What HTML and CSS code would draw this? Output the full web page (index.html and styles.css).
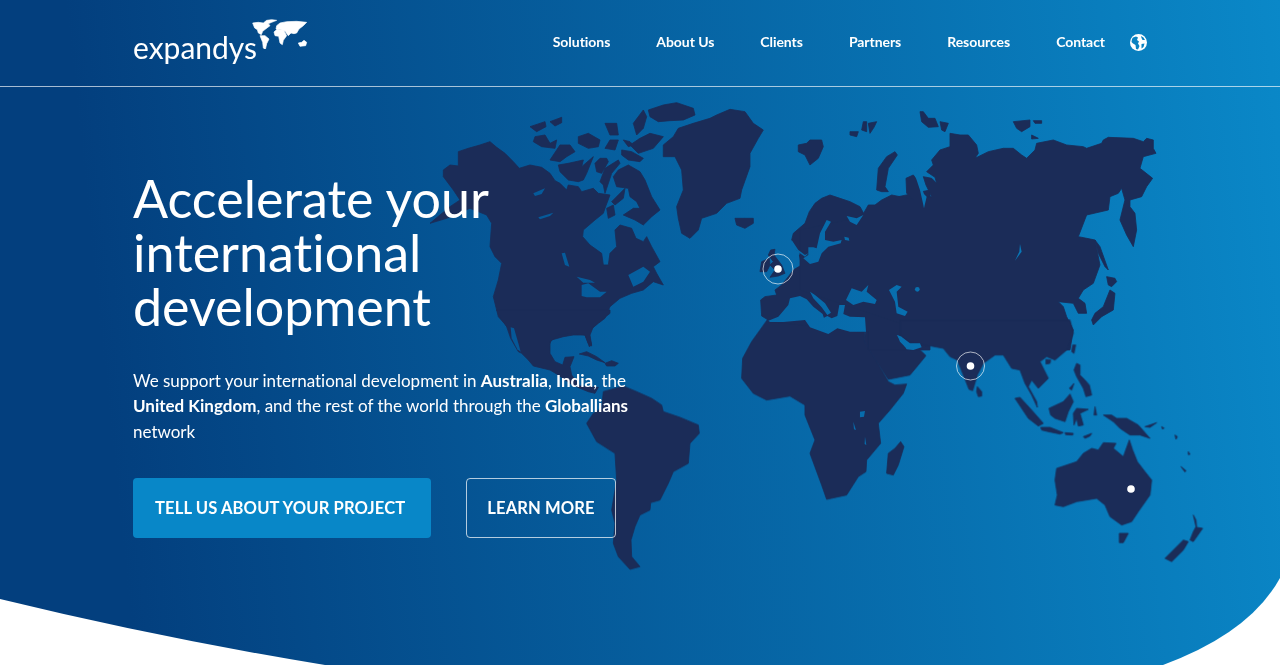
FILE: index.html
```html
<!DOCTYPE html>
<html lang="en">
<head>
    <meta charset="UTF-8">
    <meta name="viewport" content="width=device-width, initial-scale=1.0">
    <title>Expandys</title>
    <link rel="stylesheet" href="styles.css">
</head>
<body>
    <div class="hero">
        <svg class="world" viewBox="0 0 1280 665" width="1280" height="665" aria-hidden="true">
            <defs>
                <!-- seas and lakes cut out of the land -->
                <mask id="water" maskUnits="userSpaceOnUse" x="0" y="0" width="1280" height="665">
                    <rect width="1280" height="665" fill="#fff"/>
                    <g fill="#000" transform="translate(430 90) scale(.3333)">
                        <path d="M310 310L345 295L335 312L315 318ZM325 382L370 368L360 378L330 388ZM395 490L405 488L418 530L405 525ZM455 585L475 580L510 605L530 605L510 622L470 622L455 618ZM440 560L480 570L495 578L460 578ZM595 555L640 530L660 545L640 575L610 590Z"/>
                    </g>
                    <g fill="#000" transform="translate(490 310) scale(.3333)">
                        <path d="M62 52L72 55L85 100L92 125L82 118L65 85Z"/>
                    </g>
                    <g fill="#000" transform="translate(750 190) scale(.3333)">
                        <path d="M55 392L85 380L115 345L120 325L150 318L170 328L190 350L218 372L222 385L205 392L232 378L245 385L262 378L268 345L285 345L280 372L300 380L345 382L348 425L300 425L262 415L235 432L180 412L165 390L100 396L60 396Z"/>
                        <path d="M180 305L195 315L225 340L243 368L232 375L215 352L190 325Z"/>
                        <path d="M288 330L305 295L335 305L355 285L350 305L380 330L375 342L340 335L310 345Z"/>
                        <path d="M417 300L440 285L455 290L440 305L445 350L473 365L465 378L440 370L435 335Z"/>
                        <circle cx="502" cy="298" r="7"/>
                        <path d="M200 175L210 130L230 90L243 95L225 125L225 150L250 155L275 150L272 160L235 170L215 190L205 215L180 222L160 205L175 195L175 172L190 172Z"/>
                        <path d="M125 150L145 180L165 195L175 190L165 200L150 190L120 165Z"/>
                        <path d="M290 78L320 85L340 75L330 90L320 105L300 95Z"/>
                        <path d="M283 140L296 143L298 152L285 150ZM370 28L382 28L378 38Z"/>
                        <path d="M442 435L455 440L475 462L500 465L495 475L465 470L450 455Z"/>
                    </g>
                    <g fill="#000" transform="translate(800 90) scale(.3333)">
                        <path d="M660 462L665 485L645 512L658 485Z"/>
                        <path d="M345 255L352 258L372 312L380 320L372 355L368 335L360 300Z"/>
                    </g>
                    <g fill="#000" transform="translate(560 310) scale(.3333)">
                        <path d="M1010 75L1030 85L1050 100L1080 100L1085 112L1060 120L1040 118L1025 95Z"/>
                        <path d="M900 305L915 303L912 320L900 322ZM880 335L888 360L882 358ZM915 380L919 405L914 402Z"/>
                    </g>
                </mask>
            </defs>
            <g class="land" mask="url(#water)">
                <!-- north america, greenland -->
                <g transform="translate(430 90) scale(.3333)">
                    <path d="M40 240L60 225L85 228L85 185L115 175L150 165L180 155L200 172L225 190L250 215L268 235L300 225L335 232L360 250L375 272L390 280L410 300L415 285L445 290L455 305L490 295L505 310L540 315L525 355L520 370L495 390L460 420L458 440L480 465L515 490L520 525L535 525L540 490L560 470L555 420L570 405L605 415L618 445L640 455L650 440L665 470L690 515L670 530L680 550L700 585L670 575L640 600L605 610L570 625L540 650L525 685L505 700L475 725L485 765L478 770L465 735L430 735L400 740L365 750L350 780L280 780L240 720L205 680L190 620L205 570L215 520L195 500L180 470L185 400L170 375L120 355L50 385L0 400L60 350L90 330L70 300L40 260Z"/>
                    <path d="M700 165L730 140L745 115L790 100L840 85L860 75L900 58L945 65L970 100L1000 120L985 145L960 190L960 230L935 300L930 325L890 340L860 370L815 385L805 420L780 445L755 430L745 385L740 350L760 300L755 240L735 200L700 200L700 175Z"/>
                    <path d="M915 385L945 385L970 385L970 400L945 415L920 405Z"/>
                    <path d="M1105 165L1130 160L1140 150L1175 150L1180 170L1165 205L1140 225L1125 195L1105 185Z"/>
                </g>
                <!-- arctic canada -->
                <g transform="translate(550 130) scale(.3333)">
                    <path d="M85 20L115 10L150 30L145 50L115 55L85 40ZM165 -20L200 -20L205 15L180 15ZM180 30L205 30L195 60L165 55ZM220 30L240 35L250 45L235 50Z"/>
                    <path d="M295 -60L340 -75L380 -82L430 -65L435 -45L400 -30L360 -28L325 -25L300 -40Z"/>
                    <path d="M250 -20L280 -60L290 -40L280 -5L260 15Z"/>
                    <path d="M240 45L270 25L300 10L340 20L310 55L265 70Z"/>
                    <path d="M215 60L245 65L280 85L270 95L235 90L215 75Z"/>
                    <path d="M0 90L30 45L60 45L75 65L50 80L30 95Z"/>
                    <path d="M25 105L55 100L100 90L95 110L130 80L120 105L110 130L100 150L85 155L55 150L30 125Z"/>
                    <path d="M135 100L150 85L170 85L175 95L155 130L140 125Z"/>
                    <path d="M150 155L165 115L205 90L210 100L185 130L170 175L165 190L160 165Z"/>
                    <path d="M190 140L205 120L235 105L270 125L285 150L305 200L330 240L305 260L280 285L255 270L220 255L250 235L270 235L260 215L240 200L235 175L200 170Z"/>
                    <path d="M185 215L205 195L225 175L220 205L195 225ZM170 235L190 225L195 255L175 265Z"/>
                    <path d="M-60 -10L-15 -25L-12 -10L-40 5ZM0 -25L35 -38L35 -22L15 -12ZM-45 20L-15 15L0 40L20 30L15 55L-25 50L-50 35Z"/>
                </g>
                <!-- mexico, central america, caribbean -->
                <g transform="translate(490 310) scale(.3333)">
                    <path d="M20 0L32 22L50 50L62 85L85 125L95 130L115 150L130 168L180 180L205 195L240 220L270 235L295 245L315 250L325 232L300 230L270 228L245 195L240 170L252 140L225 142L218 165L195 155L180 130L180 95L205 75L245 70L285 75L295 100L305 108L300 75L310 50L360 10L360 0Z"/>
                    <path d="M268 132L290 125L320 140L345 158L320 150L295 138ZM345 160L365 152L385 160L375 168L350 168Z"/>
                </g>
                <!-- south america, africa, arabia -->
                <g transform="translate(560 310) scale(.3333)">
                    <path d="M80 340L100 310L125 295L130 245L190 228L230 245L275 265L305 285L310 305L360 322L415 345L418 370L390 400L385 460L340 485L325 520L300 570L272 578L270 600L240 615L225 650L213 690L215 740L240 770L210 778L175 740L160 700L165 640L155 600L170 510L165 430L110 395Z"/>
                    <path d="M600 60L625 25L900 25L915 60L912 92L950 155L985 215L1005 225L1040 222L1030 250L990 300L955 340L962 400L920 450L918 485L895 500L860 555L800 568L785 525L750 430L765 390L735 315L735 285L690 258L620 270L580 250L545 205L548 145L575 95Z"/>
                    <path d="M1022 395L1032 410L1015 465L1000 495L980 490L985 430L1005 415Z"/>
                    <path d="M918 0L1030 0L1020 60L1010 75L1030 95L1045 120L1070 110L1098 137L1075 165L1050 195L985 208L950 155L912 92L918 60Z"/>
                </g>
                <!-- europe -->
                <g transform="translate(750 190) scale(.3333)">
                    <path d="M125 150L130 130L165 100L178 65L195 40L215 25L240 15L270 25L300 35L330 50L342 72L365 62L385 45L420 32L445 20L540 0L540 480L355 480L355 425L60 395L55 390L35 378L32 330L45 320L80 315L75 300L95 285L115 260L130 240L155 225L148 195L165 190L175 170L165 195L140 180Z"/>
                    <path d="M62 180L75 178L72 195L95 225L105 250L85 258L60 262L75 240L60 225L70 215L55 195Z"/>
                    <path d="M35 215L58 205L60 225L50 245L30 245Z"/>
                </g>
                <!-- russia, china, japan -->
                <g transform="translate(800 90) scale(.3333)">
                    <path d="M185 380L205 345L225 345L245 330L275 315L300 320L340 328L320 310L318 265L340 255L355 275L365 310L380 320L385 320L395 320L378 285L370 260L395 265L410 280L405 262L380 245L400 225L395 210L420 180L450 170L450 130L480 135L505 135L530 165L535 190L525 205L565 185L610 175L640 175L665 195L680 205L705 180L710 160L760 150L800 165L850 170L860 175L905 160L910 150L925 142L1000 145L1030 155L1040 145L1060 150L1060 175L1068 190L1030 200L1020 235L1058 265L1040 290L1025 320L990 330L990 350L1005 370L1010 420L1000 470L980 435L960 390L975 330L965 295L955 310L930 320L925 360L860 375L835 440L860 445L885 450L900 525L880 580L850 600L835 625L855 640L860 670L835 670L820 640L775 635L790 650L800 680L820 720L810 780L500 780L300 700L0 600L0 420Z"/>
                    <path d="M230 300L235 235L260 200L285 185L292 195L265 235L255 290L265 305L245 305Z"/>
                    <path d="M360 65L370 65L385 85L405 85L415 110L385 112L365 95ZM420 95L445 100L435 125L425 120ZM640 95L690 90L690 110L665 125L650 115ZM700 92L725 92L725 100L705 100ZM695 135L715 145L695 147Z"/>
                    <path d="M190 95L200 95L200 125L185 120ZM150 125L175 125L170 140L150 135ZM205 100L230 95L222 112L210 130Z"/>
                    <path d="M875 690L885 670L910 650L930 600L945 610L940 660L905 680L880 705ZM920 560L945 565L950 575L935 590L925 585ZM885 450L900 470L925 540L915 530L895 490Z"/>
                </g>
                <!-- south asia, islands, australia -->
                <g transform="translate(900 320) scale(.3333)">
                    <path d="M0 0L0 45L25 65L50 70L130 85L150 110L172 120L190 165L207 208L218 212L232 165L250 130L285 105L310 105L335 145L360 150L375 190L395 225L412 262L410 245L385 200L395 180L415 205L445 175L420 125L440 110L465 120L500 90L520 40L510 0Z"/>
                    <path d="M232 200L245 215L245 228L235 230L230 215ZM438 118L452 120L450 130L438 132ZM518 75L527 75L522 100L515 95Z"/>
                    <path d="M345 235L360 232L395 270L430 310L415 318L385 295ZM422 322L450 322L490 338L480 342L445 335L425 330ZM495 338L520 340L518 345L497 344ZM550 350L575 340L570 348L555 355Z"/>
                    <path d="M447 265L490 245L510 222L520 245L505 275L495 305L465 295L452 285Z"/>
                    <path d="M520 280L530 265L565 268L540 280L550 315L535 318L530 295L522 315ZM585 260L590 285L582 285Z"/>
                    <path d="M522 150L530 130L540 135L540 165L555 180L568 195L575 225L558 230L550 205L530 170ZM508 205L522 190L515 210Z"/>
                    <path d="M610 285L635 285L650 295L680 295L715 315L750 355L720 345L690 345L660 325L640 305ZM735 320L770 308L750 322Z"/>
                    <path d="M465 480L470 445L530 425L550 400L575 385L595 390L610 368L648 370L640 385L670 410L688 360L698 390L712 425L735 455L755 480L750 525L715 575L695 605L665 615L630 590L615 555L590 535L530 545L490 560L465 555L472 525Z"/>
                    <path d="M658 640L685 640L670 668L658 668ZM795 715L850 660L865 665L850 690L815 725ZM880 585L888 600L890 622L908 625L880 665L870 660L880 635L888 620ZM785 320L792 324L788 328ZM825 345L832 350L828 358ZM865 395L870 403L865 404ZM843 440L858 452L855 456Z"/>
                </g>
            </g>
            <circle class="pin" cx="778" cy="269" r="3.8"/>
            <circle class="pin-ring" cx="778" cy="269" r="15"/>
            <circle class="pin" cx="970.5" cy="366" r="3.8"/>
            <circle class="pin-ring" cx="970.5" cy="366" r="14"/>
            <circle class="pin" cx="1131" cy="489" r="3.8"/>
        </svg>

        <div class="topbar">
            <a class="logo" href="#">
                <span class="logo-text">expandys</span>
                <svg class="logo-map" viewBox="396 58 168 90" width="56" height="30" aria-hidden="true">
                    <path d="M398 70L415 68L430 70L440 62L455 60L470 62L455 68L445 72L450 78L437 88L428 95L424 105L415 100L412 90L404 85Z"/>
                    <path d="M420 108L435 108L447 118L440 132L436 150L430 145L428 128Z"/>
                    <path d="M470 78L480 70L500 66L530 65L560 68L550 78L537 88L530 100L522 102L513 100L505 108L495 95L480 88L468 88Z"/>
                    <path d="M462 97L472 88L490 90L500 108L490 122L487 135L480 130L476 110L465 108Z"/>
                    <path d="M535 130L545 128L552 122L560 128L557 138L540 140Z"/>
                </svg>
            </a>
            <div class="nav">
                <a href="#">Solutions</a>
                <a href="#">About Us</a>
                <a href="#">Clients</a>
                <a href="#">Partners</a>
                <a href="#">Resources</a>
                <a href="#">Contact</a>
                <svg class="globe" viewBox="0 0 17 17" width="17" height="17" aria-hidden="true">
                    <circle cx="8.5" cy="8.5" r="8.5" fill="#fff"/>
                    <path fill="#0a82c1" d="M3 3.5L6 2.5L8 3.5L7 6L9 7.5L8 9.5L9.5 12L8 15.5L6 15L5.5 11L3 9.5L1.5 8L2 5ZM11 2L13.5 3.5L15 6L12.5 6L11.5 4ZM11.5 10L14.5 9.5L13.5 13L11.5 14.5Z"/>
                </svg>
            </div>
        </div>

        <div class="intro">
            <h1>Accelerate your<br>international<br>development</h1>
            <p>We support your international development in <b>Australia</b>, <b>India</b>, the <b>United Kingdom</b>, and the rest of the world through the <b>Globallians</b> network</p>
            <div class="buttons">
                <a class="btn btn-fill" href="#">TELL US ABOUT YOUR PROJECT</a>
                <a class="btn btn-line" href="#">LEARN MORE</a>
            </div>
        </div>
    </div>
</body>
</html>
```

FILE: styles.css
```css
body {
    margin: 0;
    background-color: #fff;
    font-family: Lato, "Open Sans", Arial, sans-serif;
    font-variant-ligatures: none;
    color: #fff;
}
a {
    color: #fff;
    text-decoration: none;
}
.hero {
    position: relative;
    height: 665px;
    overflow: hidden;
    background: linear-gradient(84deg, #033f7e 10%, #0a88c8 100%);
    clip-path: path("M0 0H1280V578Q1250 633 1163 665H325Q160 638 0 599Z");
}
.world {
    position: absolute;
    left: 0;
    top: 0;
}
.land {
    fill: #1b2c58;
    stroke: #1b2c58;
    stroke-width: 2.5;
    stroke-linejoin: round;
}
.pin {
    fill: #fff;
}
.pin-ring {
    fill: none;
    stroke: rgba(255, 255, 255, 0.65);
    stroke-width: 1;
}
.topbar {
    position: relative;
    height: 86px;
    padding: 0 133px;
    border-bottom: 1px solid rgba(255, 255, 255, 0.65);
    display: flex;
    align-items: center;
    justify-content: space-between;
}
.logo {
    display: flex;
    align-items: flex-start;
    height: 50px;
}
.logo-text {
    font-size: 30px;
    font-weight: 400;
    line-height: 50px;
    margin-top: 4px;
}
.logo-map {
    fill: #fff;
    stroke: #fff;
    stroke-width: 2;
    stroke-linejoin: round;
    margin-top: 1px;
    margin-left: -5px;
}
.nav {
    display: flex;
    align-items: center;
    gap: 46px;
    margin-bottom: 4px;
    font-size: 14px;
    font-weight: 700;
    letter-spacing: -0.05px;
}
.globe {
    margin-top: 2px;
    margin-left: -21px;
}
.intro {
    position: relative;
    padding: 84px 133px 0;
}
.intro h1 {
    margin: 0;
    font-size: 52px;
    font-weight: 400;
    line-height: 54px;
}
.intro p {
    width: 510px;
    margin: 34.5px 0 0;
    font-size: 17px;
    line-height: 25.5px;
}
.buttons {
    display: flex;
    gap: 35px;
    margin-top: 33.5px;
}
.btn {
    height: 60px;
    box-sizing: border-box;
    border-radius: 4px;
    display: flex;
    align-items: center;
    font-size: 16.6px;
    font-weight: 700;
    letter-spacing: 0.1px;
}
.btn-fill {
    padding: 0 26px 0 22px;
    background-color: #0887c8;
}
.btn-line {
    padding: 0 20px;
    border: 1px solid rgba(255, 255, 255, 0.7);
}
```
